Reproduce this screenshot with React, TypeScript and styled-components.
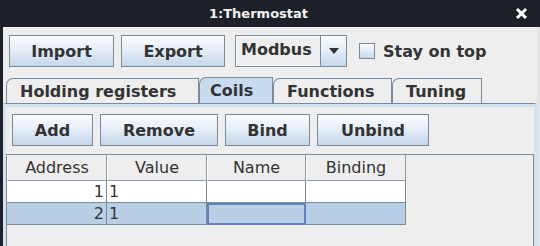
import { Fragment } from 'react';
import styled, { createGlobalStyle, css } from 'styled-components';

const GlobalStyle = createGlobalStyle`
  html, body {
    margin: 0;
    padding: 0;
    background: #eeeeee;
  }
  body {
    font-family: 'DejaVu Sans', 'Liberation Sans', sans-serif;
    color: #333333;
  }
`;

const metalGradient = css`
  background: linear-gradient(180deg, #fbfcfe 0%, #e6eef7 45%, #c5d7ea 100%);
  border: 1px solid #7a8a99;
`;

const Window = styled.div`
  width: 540px;
  height: 246px;
  display: flex;
  flex-direction: column;
  overflow: hidden;
`;

const TitleBar = styled.div`
  height: 27px;
  flex: none;
  background: #1d2028;
  display: flex;
  align-items: center;
  justify-content: center;
  position: relative;
`;

const Title = styled.span`
  color: #f2f2f2;
  font-weight: bold;
  font-size: 13px;
  margin-right: 23px;
`;

const Close = styled.svg`
  position: absolute;
  right: 12px;
  top: 7px;
`;

const Frame = styled.div`
  flex: 1;
  display: flex;
  flex-direction: column;
  background: #eeeeee;
  border-left: 3px solid #1d2028;
  border-right: 3px solid #e4e4e4;
  min-height: 0;
`;

const Toolbar = styled.div`
  display: flex;
  align-items: center;
  gap: 7px;
  padding: 8px 6px 0 6px;
`;

const Button = styled.button<{ $w: number }>`
  ${metalGradient};
  width: ${(p) => p.$w}px;
  height: 32px;
  padding: 0;
  font-family: 'DejaVu Sans', sans-serif;
  font-weight: bold;
  font-size: 16px;
  color: #333333;
  flex: none;
`;

const Combo = styled.div`
  display: flex;
  height: 32px;
  width: 112px;
  margin-left: 3px;
  border: 1px solid #7a8a99;
  box-sizing: border-box;
  background: #eeeeee;
  flex: none;
`;

const ComboLabel = styled.div`
  flex: 1;
  display: flex;
  align-items: center;
  padding-left: 4px;
  font-weight: bold;
  font-size: 16px;
  background: #eeeeee;
  border: 1px solid #ffffff;
  border-right: none;
  padding-bottom: 3px;
`;

const ComboArrow = styled.div`
  ${metalGradient};
  width: 25px;
  border-top: none;
  border-bottom: none;
  border-right: none;
  display: flex;
  align-items: center;
  justify-content: center;
`;

const CheckRow = styled.label`
  display: flex;
  align-items: center;
  gap: 8px;
  margin-left: 5px;
  font-weight: bold;
  font-size: 16px;
`;

const CheckBox = styled.span`
  ${metalGradient};
  width: 14px;
  height: 14px;
  display: inline-block;
`;

const TabStrip = styled.div`
  display: flex;
  align-items: flex-end;
  padding: 10px 0 0 3px;
  height: 26px;
`;

const Tab = styled.div<{ $w: number; $active?: boolean }>`
  width: ${(p) => p.$w}px;
  height: ${(p) => (p.$active ? 26 : 25)}px;
  box-sizing: border-box;
  border: 1px solid #7a8a99;
  border-bottom: none;
  border-top-left-radius: 7px 7px;
  background: ${(p) => (p.$active ? '#c8dcf0' : '#eeeeee')};
  font-weight: bold;
  font-size: 16px;
  padding-left: ${(p) => (p.$active ? 10 : 13)}px;
  display: flex;
  align-items: center;
  flex: none;
`;

const TabBody = styled.div`
  flex: 1;
  display: flex;
  flex-direction: column;
  border-top: 1px solid #7a8a99;
  border-left: 3px solid #d2e1f0;
  border-right: 3px solid #d2e1f0;
  box-shadow: inset 0 3px 0 #d2e1f0;
  padding-top: 10px;
`;

const ActionRow = styled.div`
  display: flex;
  gap: 7px;
  padding-left: 6px;
`;

const ScrollPane = styled.div`
  margin-top: 8px;
  flex: 1;
  border: 1px solid #7a8a99;
  border-bottom: none;
  background: #eeeeee;
`;

const Grid = styled.div`
  display: grid;
  grid-template-columns: 100px 100px 99px 100px;
  width: 399px;
`;

const HeadCell = styled.div`
  height: 25px;
  border-right: 1px solid #8c9aa8;
  border-bottom: 1px solid #8c9aa8;
  border-left: 1px solid #ffffff;
  display: flex;
  align-items: center;
  justify-content: center;
  font-size: 16px;
  color: #333333;
  background: #eeeeee;
`;

const Cell = styled.div<{ $sel?: boolean; $right?: boolean; $focus?: boolean }>`
  height: 21px;
  border-right: 1px solid #7a8a99;
  border-bottom: 1px solid #7a8a99;
  background: ${(p) => (p.$sel ? '#b8cfe5' : '#ffffff')};
  display: flex;
  align-items: center;
  justify-content: ${(p) => (p.$right ? 'flex-end' : 'flex-start')};
  padding: 0 2px;
  font-size: 16px;
  color: #333333;
  ${(p) =>
    p.$focus &&
    css`
      outline: 2px solid #6382bf;
      outline-offset: -2px;
    `}
`;

const tabs = [
  { label: 'Holding registers', w: 193 },
  { label: 'Coils', w: 74, active: true },
  { label: 'Functions', w: 119 },
  { label: 'Tuning', w: 90 },
];

const rows = [
  { addr: 1, value: '1', sel: false },
  { addr: 2, value: '1', sel: true },
];

export default function App() {
  return (
    <>
      <GlobalStyle />
      <Window>
        <TitleBar>
          <Title>1:Thermostat</Title>
          <Close width="13" height="13" viewBox="0 0 13 13">
            <path d="M2 2 L11 11 M11 2 L2 11" stroke="#ffffff" strokeWidth="3" />
          </Close>
        </TitleBar>
        <Frame>
          <Toolbar>
            <Button $w={105}>Import</Button>
            <Button $w={104}>Export</Button>
            <Combo>
              <ComboLabel>Modbus</ComboLabel>
              <ComboArrow>
                <svg width="10" height="6" viewBox="0 0 10 6">
                  <path d="M0 0 H10 L5 6 Z" fill="#333" />
                </svg>
              </ComboArrow>
            </Combo>
            <CheckRow>
              <CheckBox />
              Stay on top
            </CheckRow>
          </Toolbar>
          <TabStrip>
            {tabs.map((t) => (
              <Tab key={t.label} $w={t.w} $active={t.active}>
                {t.label}
              </Tab>
            ))}
          </TabStrip>
          <TabBody>
            <ActionRow>
              <Button $w={81}>Add</Button>
              <Button $w={118}>Remove</Button>
              <Button $w={85}>Bind</Button>
              <Button $w={112}>Unbind</Button>
            </ActionRow>
            <ScrollPane>
              <Grid>
                <HeadCell>Address</HeadCell>
                <HeadCell>Value</HeadCell>
                <HeadCell>Name</HeadCell>
                <HeadCell>Binding</HeadCell>
                {rows.map((r) => (
                  <Fragment key={r.addr}>
                    <Cell $sel={r.sel} $right>
                      {r.addr}
                    </Cell>
                    <Cell $sel={r.sel}>{r.value}</Cell>
                    <Cell $sel={r.sel} $focus={r.sel} />
                    <Cell $sel={r.sel} />
                  </Fragment>
                ))}
              </Grid>
            </ScrollPane>
          </TabBody>
        </Frame>
      </Window>
    </>
  );
}
